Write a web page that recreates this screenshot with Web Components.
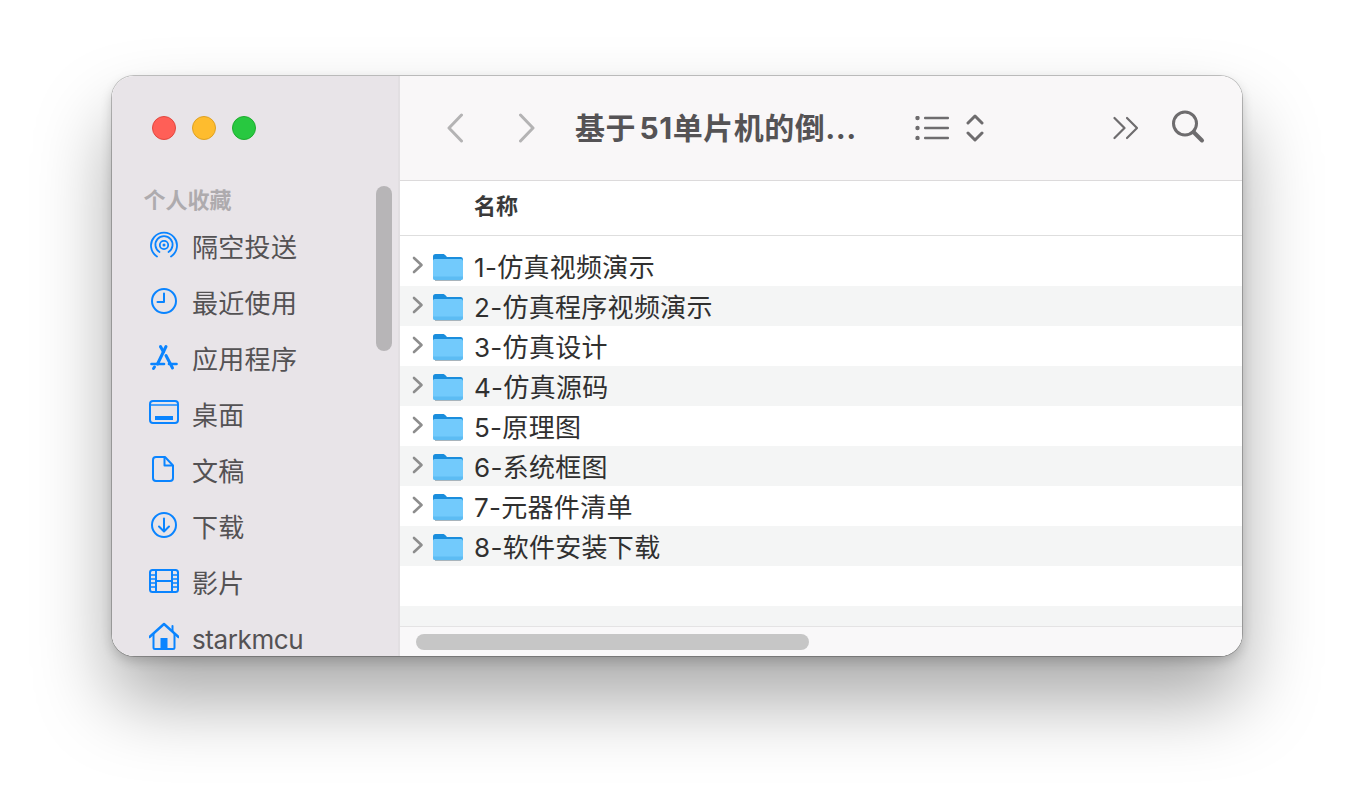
<!DOCTYPE html>
<html lang="zh">
<head>
<meta charset="utf-8">
<title>Finder</title>
<style>
    html, body { margin: 0; height: 100%; background: #fff; overflow: hidden; }
    body { font-family: Inter, "Noto Sans CJK SC", sans-serif; }
</style>
</head>
<body>
<finder-window>
    <finder-sidebar slot="sidebar" heading="个人收藏">
        <sidebar-item icon="airdrop">隔空投送</sidebar-item>
        <sidebar-item icon="recent">最近使用</sidebar-item>
        <sidebar-item icon="apps">应用程序</sidebar-item>
        <sidebar-item icon="desktop">桌面</sidebar-item>
        <sidebar-item icon="doc">文稿</sidebar-item>
        <sidebar-item icon="download">下载</sidebar-item>
        <sidebar-item icon="movie">影片</sidebar-item>
        <sidebar-item icon="home">starkmcu</sidebar-item>
    </finder-sidebar>
    <finder-toolbar slot="toolbar" heading="基于 51单片机的倒..."></finder-toolbar>
    <file-list slot="content" column="名称">
        <file-row>1-仿真视频演示</file-row>
        <file-row alt>2-仿真程序视频演示</file-row>
        <file-row>3-仿真设计</file-row>
        <file-row alt>4-仿真源码</file-row>
        <file-row>5-原理图</file-row>
        <file-row alt>6-系统框图</file-row>
        <file-row>7-元器件清单</file-row>
        <file-row alt>8-软件安装下载</file-row>
    </file-list>
</finder-window>

<script>
const SIDEBAR_ICONS = {
    airdrop: `<g fill="none" stroke="#0a84ff" stroke-width="1.8" stroke-linecap="round">
            <path d="M8 25.500a13 13 0 1 1 14 0"/><path d="M10.500 21a8.600 8.600 0 1 1 9 0"/>
            <circle cx="15" cy="14" r="4.200"/></g><circle cx="15" cy="14" r="1.500" fill="#0a84ff"/>`,
    recent: `<g fill="none" stroke="#0a84ff" stroke-width="2" stroke-linecap="round" stroke-linejoin="round">
            <circle cx="15" cy="14" r="12"/><path d="M15 6.500V15H8.500"/></g>`,
    apps: `<g fill="none" stroke="#0a84ff" stroke-linecap="round">
            <path d="M17 3.500 8.500 21" stroke-width="3"/><path d="M11.500 3.500 14.500 9" stroke-width="3"/><path d="M17 12.500 23.500 25" stroke-width="3"/>
            <path d="M2.500 21H15" stroke-width="2.600"/><path d="M20 21h7.500" stroke-width="2.600"/><path d="M4.500 25.500l1-1.500" stroke-width="3"/></g>`,
    desktop: `<rect x="1" y="2" width="28" height="22" rx="3" fill="none" stroke="#0a84ff" stroke-width="2"/>
            <rect x="6" y="17" width="18" height="4" fill="#0a84ff"/>
            <path d="M1 6h28" stroke="#0a84ff" stroke-width="1.400"/>`,
    doc: `<g fill="none" stroke="#0a84ff" stroke-width="2" stroke-linejoin="round">
            <path d="M7 2h9l8 8.500V23a3 3 0 0 1-3 3H7a3 3 0 0 1-3-3V5a3 3 0 0 1 3-3z"/><path d="M15.500 2v8.500H24"/></g>`,
    download: `<g fill="none" stroke="#0a84ff" stroke-width="2" stroke-linecap="round" stroke-linejoin="round">
            <circle cx="15" cy="14" r="12"/><path d="M15 7.500v12.500"/><path d="M10 15.500l5 5 5-5"/></g>`,
    movie: `<rect x="1" y="3" width="28" height="22" rx="2.500" fill="none" stroke="#0a84ff" stroke-width="2"/>
            <path d="M7 3v22M23 3v22M7 14h16" stroke="#0a84ff" stroke-width="2"/>
            <path d="M1 8h6M1 12h6M1 16h6M1 20h6M23 8h6M23 12h6M23 16h6M23 20h6" stroke="#0a84ff" stroke-width="1.600"/>`,
    home: `<g fill="none" stroke="#0a84ff" stroke-linecap="round" stroke-linejoin="round">
            <path d="M.500 14 15 1l14.500 13" stroke-width="2.400"/><path d="M4.500 11V24.500A1.500 1.500 0 0 0 6 26h18a1.500 1.500 0 0 0 1.500-1.500V11" stroke-width="2"/><path d="M23.500 3v5" stroke-width="2"/></g>
            <rect x="11.500" y="15" width="7" height="11" fill="#0a84ff"/>`
};

class FinderWindow extends HTMLElement {
    constructor() {
        super();
        this.attachShadow({ mode: 'open' });
    }

    connectedCallback() {
        this.shadowRoot.innerHTML = `
            <style>
                :host {
                    display: block;
                    padding: 76px 112px 148px;
                }
                .window {
                    display: grid;
                    grid-template-columns: 288px 1fr;
                    grid-template-rows: 105px 1fr;
                    height: 580px;
                    box-sizing: border-box;
                    border-radius: 22px;
                    overflow: hidden;
                    background: #fff;
                }
                .frame {
                    border-radius: 22px;
                    box-shadow: 0 0 0 1px rgba(0, 0, 0, 0.22), 0 5px 12px rgba(0, 0, 0, 0.18), 0 44px 76px rgba(0, 0, 0, 0.34);
                }
                .side { grid-row: 1 / 3; min-height: 0; }
                ::slotted([slot="sidebar"]) { height: 100%; }
            </style>
            <div class="frame">
                <div class="window">
                    <div class="side"><slot name="sidebar"></slot></div>
                    <slot name="toolbar"></slot>
                    <slot name="content"></slot>
                </div>
            </div>
        `;
    }
}

class TrafficLights extends HTMLElement {
    constructor() {
        super();
        this.attachShadow({ mode: 'open' });
    }

    connectedCallback() {
        this.shadowRoot.innerHTML = `
            <style>
                :host { display: flex; gap: 16px; }
                span {
                    width: 24px;
                    height: 24px;
                    box-sizing: border-box;
                    border-radius: 50%;
                    border: 1px solid;
                }
                .close { background: #ff5f57; border-color: #e1483f; }
                .min { background: #febc2e; border-color: #dea123; }
                .max { background: #28c840; border-color: #1eac2e; }
            </style>
            <span class="close"></span><span class="min"></span><span class="max"></span>
        `;
    }
}

class FinderSidebar extends HTMLElement {
    constructor() {
        super();
        this.attachShadow({ mode: 'open' });
    }

    connectedCallback() {
        this.shadowRoot.innerHTML = `
            <style>
                :host {
                    display: block;
                    position: relative;
                    height: 100%;
                    box-sizing: border-box;
                    overflow: hidden;
                    background: #e8e4e8;
                    border-right: 2px solid #e2dfe2;
                }
                .lights { padding: 40px 0 0 40px; }
                h2 {
                    margin: 46px 0 0 31.500px;
                    font-size: 22px;
                    line-height: 28px;
                    font-weight: 700;
                    color: #aeabae;
                }
                .items { margin-top: 3px; }
                .thumb {
                    position: absolute;
                    left: 264px;
                    top: 110px;
                    width: 16px;
                    height: 165px;
                    border-radius: 8px;
                    background: #b7b5b7;
                }
            </style>
            <div class="lights"><traffic-lights></traffic-lights></div>
            <h2>${this.getAttribute("heading")}</h2>
            <div class="items"><slot></slot></div>
            <div class="thumb"></div>
        `;
    }
}

class SidebarItem extends HTMLElement {
    constructor() {
        super();
        this.attachShadow({ mode: 'open' });
    }

    connectedCallback() {
        const icon = this.getAttribute("icon");
        this.shadowRoot.innerHTML = `
            <style>
                :host {
                    display: flex;
                    align-items: center;
                    gap: 13px;
                    height: 56px;
                    padding-left: 37px;
                    font-size: 26px;
                    letter-spacing: 0.3px;
                    color: #545254;
                    white-space: nowrap;
                }
                :host([icon="home"]) { letter-spacing: -0.4px; }
                :host([icon="home"]) .label { padding-top: 4px; }
                svg { flex: none; width: 30px; height: 30px; }
            </style>
            <svg viewBox="0 0 30 28">${SIDEBAR_ICONS[icon]}</svg>
            <span class="label"><slot></slot></span>
        `;
    }
}

class FinderToolbar extends HTMLElement {
    constructor() {
        super();
        this.attachShadow({ mode: 'open' });
    }

    connectedCallback() {
        this.shadowRoot.innerHTML = `
            <style>
                :host {
                    display: flex;
                    align-items: center;
                    box-sizing: border-box;
                    height: 105px;
                    background: #f9f7f8;
                    border-bottom: 1px solid #dcdadb;
                }
                svg { flex: none; display: block; }
                .back { margin-left: 47px; }
                .forward { margin-left: 56px; }
                h1 {
                    flex: none;
                    width: 285px;
                    margin: 0 0 0 40px;
                    font-size: 30px;
                    line-height: 36px;
                    font-weight: 700;
                    letter-spacing: 0.5px;
                    word-spacing: -4px;
                    color: #555355;
                    white-space: nowrap;
                }
                .list { margin-left: 55px; }
                .updown { margin-left: 17px; }
                .more { margin-left: 129px; }
                .search { margin-left: 32px; margin-bottom: 2px; }
            </style>
            <svg class="back" width="16" height="30" viewBox="0 0 16 30" fill="none" stroke="#b4b3b4" stroke-width="3" stroke-linecap="round" stroke-linejoin="round">
                <path d="M14.500 2 2 15l12.500 13"/>
            </svg>
            <svg class="forward" width="16" height="30" viewBox="0 0 16 30" fill="none" stroke="#b4b3b4" stroke-width="3" stroke-linecap="round" stroke-linejoin="round">
                <path d="M1.500 2 14 15 1.500 28"/>
            </svg>
            <h1>${this.getAttribute("heading")}</h1>
            <svg class="list" width="34" height="24" viewBox="0 0 34 24" fill="#6e6c6e">
                <circle cx="2.500" cy="2" r="2.200"/><circle cx="2.500" cy="12" r="2.200"/><circle cx="2.500" cy="22" r="2.200"/>
                <rect x="9" y="0.700" width="25" height="2.600" rx="1"/><rect x="9" y="10.700" width="25" height="2.600" rx="1"/><rect x="9" y="20.700" width="25" height="2.600" rx="1"/>
            </svg>
            <svg class="updown" width="18" height="28" viewBox="0 0 18 28" fill="none" stroke="#6e6c6e" stroke-width="3" stroke-linecap="round" stroke-linejoin="round">
                <path d="M2 9l7-7 7 7"/><path d="M2 19l7 7 7-7"/>
            </svg>
            <svg class="more" width="26" height="24" viewBox="0 0 26 24" fill="none" stroke="#6e6c6e" stroke-width="2.200" stroke-linecap="round" stroke-linejoin="round">
                <path d="M1.500 2 11.500 12 1.500 22"/><path d="M14 2l10 10-10 10"/>
            </svg>
            <svg class="search" width="34" height="34" viewBox="0 0 34 34" fill="none" stroke="#6e6c6e" stroke-linecap="round">
                <circle cx="14" cy="13.500" r="11.500" stroke-width="3"/><path d="M22.500 22 31 30.500" stroke-width="4"/>
            </svg>
        `;
    }
}

class FileList extends HTMLElement {
    constructor() {
        super();
        this.attachShadow({ mode: 'open' });
    }

    connectedCallback() {
        this.shadowRoot.innerHTML = `
            <style>
                :host {
                    display: flex;
                    flex-direction: column;
                    min-height: 0;
                    background: #fff;
                }
                .head {
                    flex: none;
                    height: 55px;
                    box-sizing: border-box;
                    padding: 10px 0 0 74px;
                    border-bottom: 1px solid #dedede;
                    font-size: 22px;
                    line-height: 30px;
                    font-weight: 700;
                    color: #3a3a3a;
                }
                .rows { flex: 1; padding-top: 10px; overflow: hidden; }
                .filler { height: 40px; }
                .stripe { height: 20px; background: #f4f5f5; }
                .foot {
                    flex: none;
                    height: 30px;
                    box-sizing: border-box;
                    padding: 7px 0 0 16px;
                    background: #f9f8f9;
                    border-top: 1px solid #e4e3e4;
                }
                .bar {
                    width: 393px;
                    height: 16px;
                    border-radius: 8px;
                    background: #c6c6c6;
                }
            </style>
            <div class="head">${this.getAttribute("column")}</div>
            <div class="rows">
                <slot></slot>
                <div class="filler"></div>
                <div class="stripe"></div>
            </div>
            <div class="foot"><div class="bar"></div></div>
        `;
    }
}

class FileRow extends HTMLElement {
    constructor() {
        super();
        this.attachShadow({ mode: 'open' });
    }

    connectedCallback() {
        this.shadowRoot.innerHTML = `
            <style>
                :host {
                    display: flex;
                    align-items: center;
                    height: 40px;
                    padding-left: 12px;
                    font-size: 26px;
                    letter-spacing: 0.3px;
                    color: #303030;
                    white-space: nowrap;
                    background: #fff;
                }
                :host([alt]) { background: #f4f5f5; }
                .chev { flex: none; margin-bottom: 2px; }
                .folder { flex: none; margin: 0 10px 0 8px; }
                .label { padding-bottom: 2px; }
            </style>
            <svg class="chev" width="12" height="18" viewBox="0 0 12 18" fill="none" stroke="#8d8d8d" stroke-width="2.600" stroke-linecap="round" stroke-linejoin="round">
                <path d="M2 2l7.500 7L2 16"/>
            </svg>
            <svg class="folder" width="32" height="30" viewBox="0 0 32 30">
                <path d="M1 5.500A2.500 2.500 0 0 1 3.500 3h7.400c1 0 1.600.400 2.300 1.100L15 6h14a2.500 2.500 0 0 1 2 2.500V12H1z" fill="#1a8edd"/>
                <path d="M1 9.500A1.500 1.500 0 0 1 2.500 8H29a2 2 0 0 1 2 2v17a2 2 0 0 1-2 2H3a2 2 0 0 1-2-2z" fill="#72cafc"/>
                <path d="M1 25.500h30V27a2 2 0 0 1-2 2H3a2 2 0 0 1-2-2z" fill="#5dbcf3"/>
                <path d="M3 29.500h26" stroke="#a9b4bb" stroke-width="1"/>
            </svg>
            <span class="label"><slot></slot></span>
        `;
    }
}

window.customElements.define('finder-window', FinderWindow);
window.customElements.define('traffic-lights', TrafficLights);
window.customElements.define('finder-sidebar', FinderSidebar);
window.customElements.define('sidebar-item', SidebarItem);
window.customElements.define('finder-toolbar', FinderToolbar);
window.customElements.define('file-list', FileList);
window.customElements.define('file-row', FileRow);
</script>
</body>
</html>
